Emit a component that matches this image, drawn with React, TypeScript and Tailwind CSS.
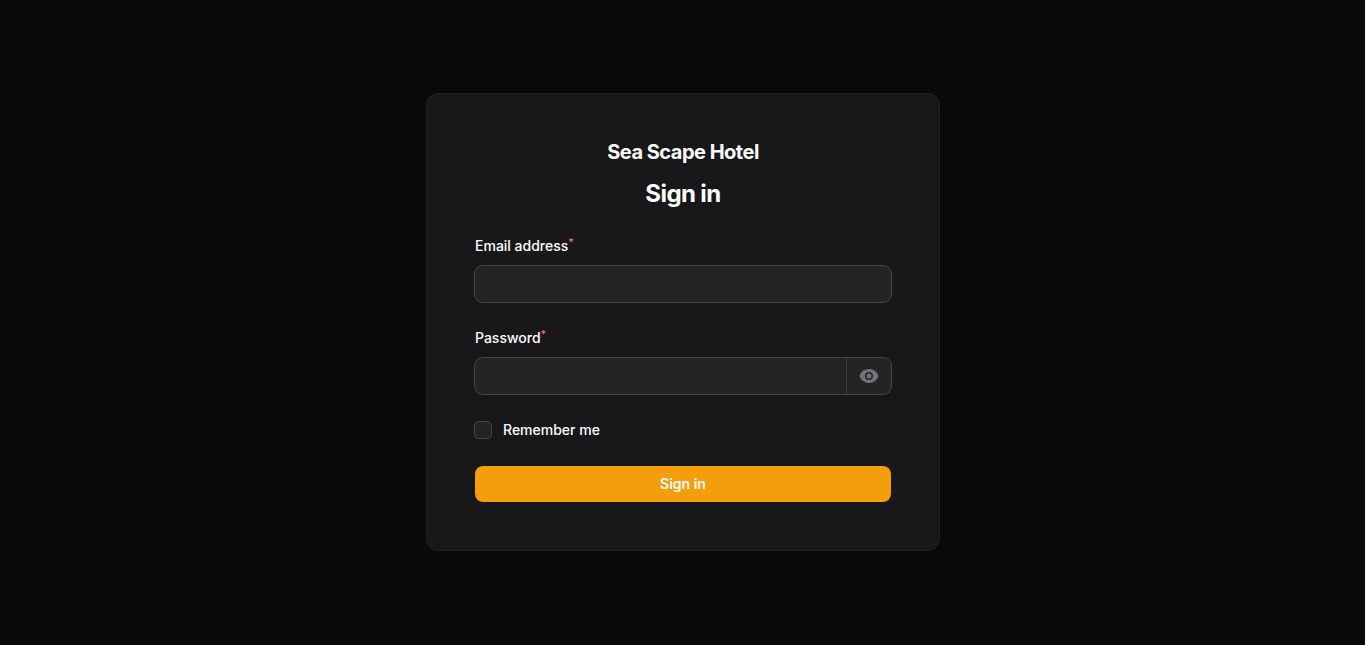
import { useState } from 'react';
import type { ReactNode } from 'react';
import { HiMiniEye, HiMiniEyeSlash } from 'react-icons/hi2';

function Field({ id, label, children }: { id: string; label: string; children: ReactNode }) {
  return (
    <div className="grid gap-2">
      <label htmlFor={id} className="text-sm leading-6 font-medium text-white">
        {label}
        <sup className="font-medium text-[#f87171]">*</sup>
      </label>
      <div className="flex rounded-lg bg-white/5 ring-1 ring-white/20 focus-within:ring-2 focus-within:ring-[#f59e0b]">
        {children}
      </div>
    </div>
  );
}

const inputClass =
  'h-9 min-w-0 flex-1 border-none bg-transparent px-3 text-sm leading-6 text-white outline-none';

export default function App() {
  const [visible, setVisible] = useState(false);

  return (
    <div className="flex min-h-screen flex-col items-center justify-center bg-[#09090b] pb-px pl-px font-['Inter',sans-serif] text-white">
      <main className="w-full max-w-lg rounded-xl bg-[#18181b] p-12 ring-1 ring-white/10">
        <section className="grid gap-6">
          <header className="flex flex-col items-center">
            <div className="mb-4 text-xl leading-5 font-bold tracking-tight">Sea Scape Hotel</div>
            <h1 className="text-center text-2xl font-bold tracking-tight">Sign in</h1>
          </header>

          <form className="grid gap-6" onSubmit={(event) => event.preventDefault()}>
            <Field id="email" label="Email address">
              <input id="email" type="email" required autoComplete="email" className={inputClass} />
            </Field>

            <Field id="password" label="Password">
              <input
                id="password"
                type={visible ? 'text' : 'password'}
                required
                autoComplete="current-password"
                className={inputClass}
              />
              <button
                type="button"
                aria-label={visible ? 'Hide password' : 'Show password'}
                onClick={() => setVisible(!visible)}
                className="flex items-center border-l border-white/10 px-3 text-[#71717a]"
              >
                {visible ? <HiMiniEyeSlash className="size-5" /> : <HiMiniEye className="size-5" />}
              </button>
            </Field>

            <label className="flex items-center gap-3 text-sm leading-6 font-medium">
              <input
                type="checkbox"
                className="size-4 appearance-none rounded bg-white/5 ring-1 ring-white/20 checked:bg-[#f59e0b]"
              />
              Remember me
            </label>

            <button
              type="submit"
              className="rounded-lg bg-[#f59e0b] px-3 py-2 text-sm font-semibold text-white"
            >
              Sign in
            </button>
          </form>
        </section>
      </main>
    </div>
  );
}
